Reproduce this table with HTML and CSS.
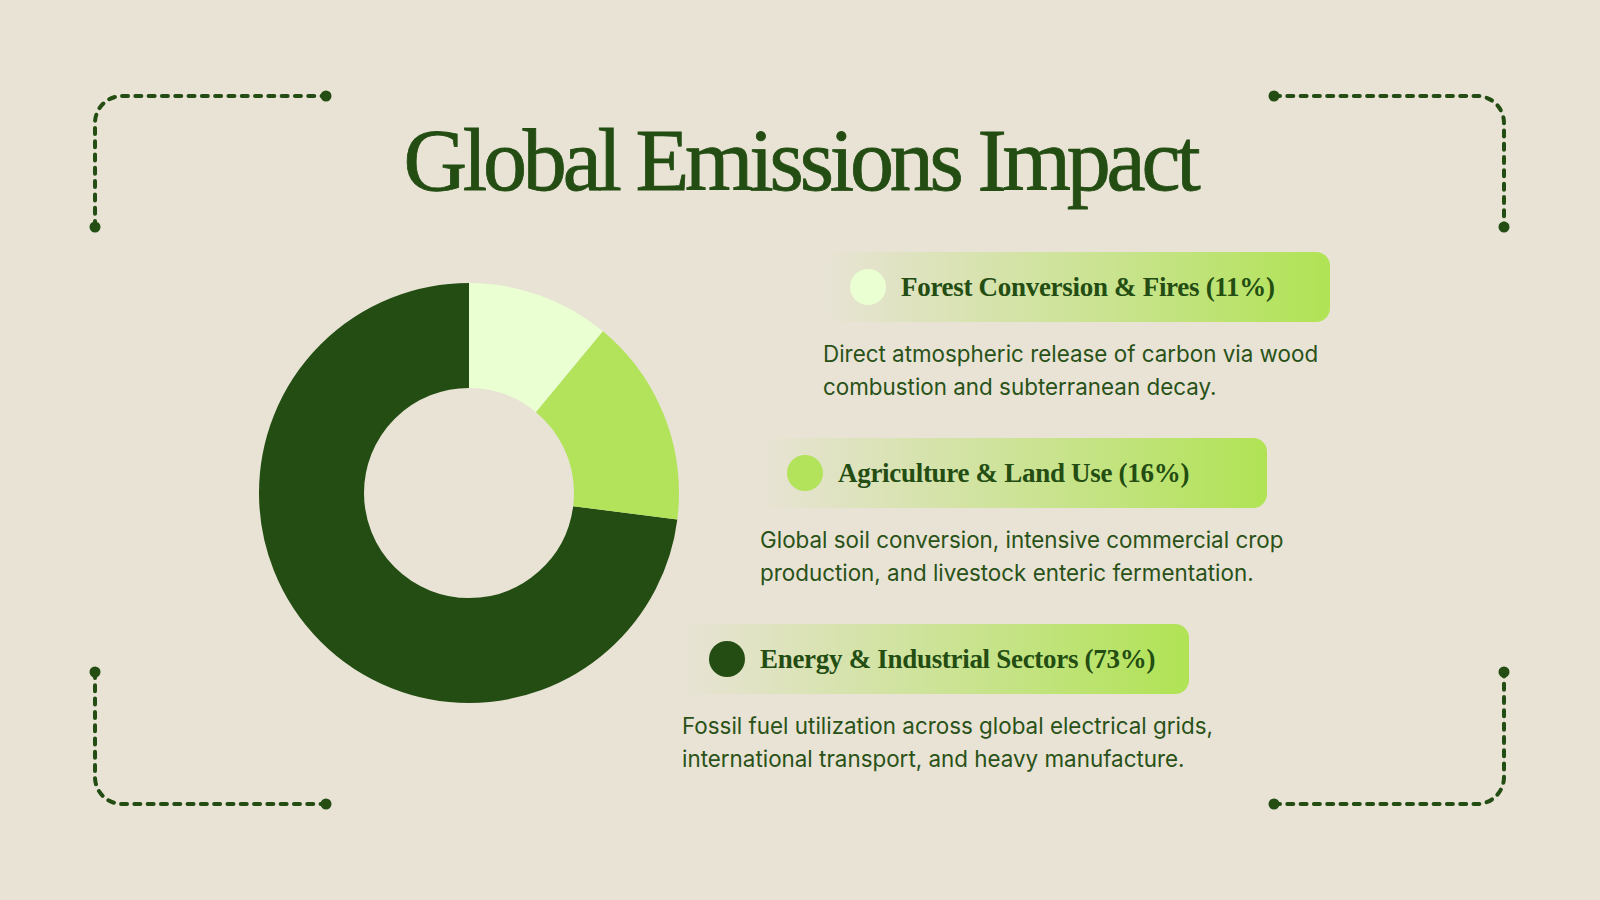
FILE: index.html
```html
<!DOCTYPE html>
<html lang="en">
<head>
<meta charset="utf-8">
<title>Global Emissions Impact</title>
<link rel="stylesheet" href="styles.css">
</head>
<body>
<div class="slide">
  <svg class="frame" width="1600" height="900" viewBox="0 0 1600 900" aria-hidden="true">
    <g class="frame-line">
      <path d="M95 227 L95 123 A27 27 0 0 1 122 96 L326 96"/>
      <path d="M1274 96 L1477 96 A27 27 0 0 1 1504 123 L1504 227"/>
      <path d="M95 672 L95 777 A27 27 0 0 0 122 804 L326 804"/>
      <path d="M1274 804 L1477 804 A27 27 0 0 0 1504 777 L1504 672"/>
    </g>
    <g class="frame-dot">
      <circle cx="95" cy="227" r="5.5"/>
      <circle cx="326" cy="96" r="5.5"/>
      <circle cx="1274" cy="96" r="5.5"/>
      <circle cx="1504" cy="227" r="5.5"/>
      <circle cx="95" cy="672" r="5.5"/>
      <circle cx="326" cy="804" r="5.5"/>
      <circle cx="1274" cy="804" r="5.5"/>
      <circle cx="1504" cy="672" r="5.5"/>
    </g>
  </svg>

  <h1 class="title">Global Emissions Impact</h1>

  <div class="content">
    <svg class="donut" width="420" height="420" viewBox="0 0 420 420" role="img" aria-label="Emissions share chart">
      <g transform="rotate(-90 210 210)" fill="none" stroke-width="105">
        <circle class="seg seg-dark" cx="210" cy="210" r="157.5" stroke-dasharray="722.4 989.6" stroke-dashoffset="-267.2"/>
        <circle class="seg seg-light" cx="210" cy="210" r="157.5" stroke-dasharray="108.9 989.6" stroke-dashoffset="0"/>
        <circle class="seg seg-lime" cx="210" cy="210" r="157.5" stroke-dasharray="158.3 989.6" stroke-dashoffset="-108.9"/>
      </g>
    </svg>

    <div class="legend">
      <div class="item item-1">
        <div class="pill">
          <span class="dot dot-light"></span>
          <span class="label">Forest Conversion &amp; Fires (11%)</span>
        </div>
        <p class="desc">Direct atmospheric release of carbon via wood<br>combustion and subterranean decay.</p>
      </div>
      <div class="item item-2">
        <div class="pill">
          <span class="dot dot-lime"></span>
          <span class="label">Agriculture &amp; Land Use (16%)</span>
        </div>
        <p class="desc">Global soil conversion, intensive commercial crop<br>production, and livestock enteric fermentation.</p>
      </div>
      <div class="item item-3">
        <div class="pill">
          <span class="dot dot-dark"></span>
          <span class="label">Energy &amp; Industrial Sectors (73%)</span>
        </div>
        <p class="desc">Fossil fuel utilization across global electrical grids,<br>international transport, and heavy manufacture.</p>
      </div>
    </div>
  </div>
</div>
</body>
</html>
```

FILE: styles.css
```css
* { box-sizing: border-box; }

html, body {
  margin: 0;
  padding: 0;
  background: #e8e3d5;
}

.slide {
  position: relative;
  width: 1600px;
  height: 900px;
  overflow: hidden;
  background: #e8e3d5;
  color: #234d12;
  padding-top: 117px;
}

.frame {
  position: absolute;
  left: 0;
  top: 0;
  pointer-events: none;
}

.frame-line path {
  fill: none;
  stroke: #234d12;
  stroke-width: 4;
  stroke-linecap: round;
  stroke-dasharray: 6 7.3;
}

.frame-dot circle {
  fill: #234d12;
}

.title {
  margin: 0;
  font-family: "Liberation Serif", "Times New Roman", serif;
  font-weight: 400;
  font-size: 88px;
  line-height: 88px;
  letter-spacing: -4.2px;
  text-align: center;
  color: #234d12;
  -webkit-text-stroke: 0.8px #234d12;
}

.content {
  display: flex;
  align-items: flex-start;
  margin-top: 47px;
}

.donut {
  display: block;
  flex: none;
  margin-top: 31px;
  margin-left: 259px;
}

.seg-dark { stroke: #234d12; }
.seg-light { stroke: #eaffd2; }
.seg-lime { stroke: #b2e35a; }

.legend {
  display: flex;
  flex-direction: column;
  gap: 35px;
  margin-left: 3px;
}

.item {
  width: 507px;
}

.item-1 { margin-left: 141px; }
.item-2 { margin-left: 78px; }
.item-3 { margin-left: 0; }

.pill {
  display: flex;
  align-items: center;
  gap: 15px;
  height: 70px;
  padding-left: 27px;
  border-radius: 14px;
  background: linear-gradient(90deg, rgba(178, 227, 90, 0) 0%, rgba(178, 227, 90, 0.25) 25%, rgba(178, 227, 90, 0.6) 60%, #b0e354 100%);
}

.dot {
  flex: none;
  width: 36px;
  height: 36px;
  border-radius: 50%;
}

.dot-light { background: #eaffd2; }
.dot-lime { background: #b2e35a; }
.dot-dark { background: #234d12; }

.label {
  font-family: "Liberation Serif", "Times New Roman", serif;
  font-weight: 700;
  font-size: 27px;
  letter-spacing: -0.3px;
  color: #234d12;
  white-space: nowrap;
}

.desc {
  margin: 15px 0 0;
  font-family: "Inter", "Liberation Sans", sans-serif;
  font-size: 22.4px;
  line-height: 33px;
  color: #2a5218;
  white-space: nowrap;
}
```
